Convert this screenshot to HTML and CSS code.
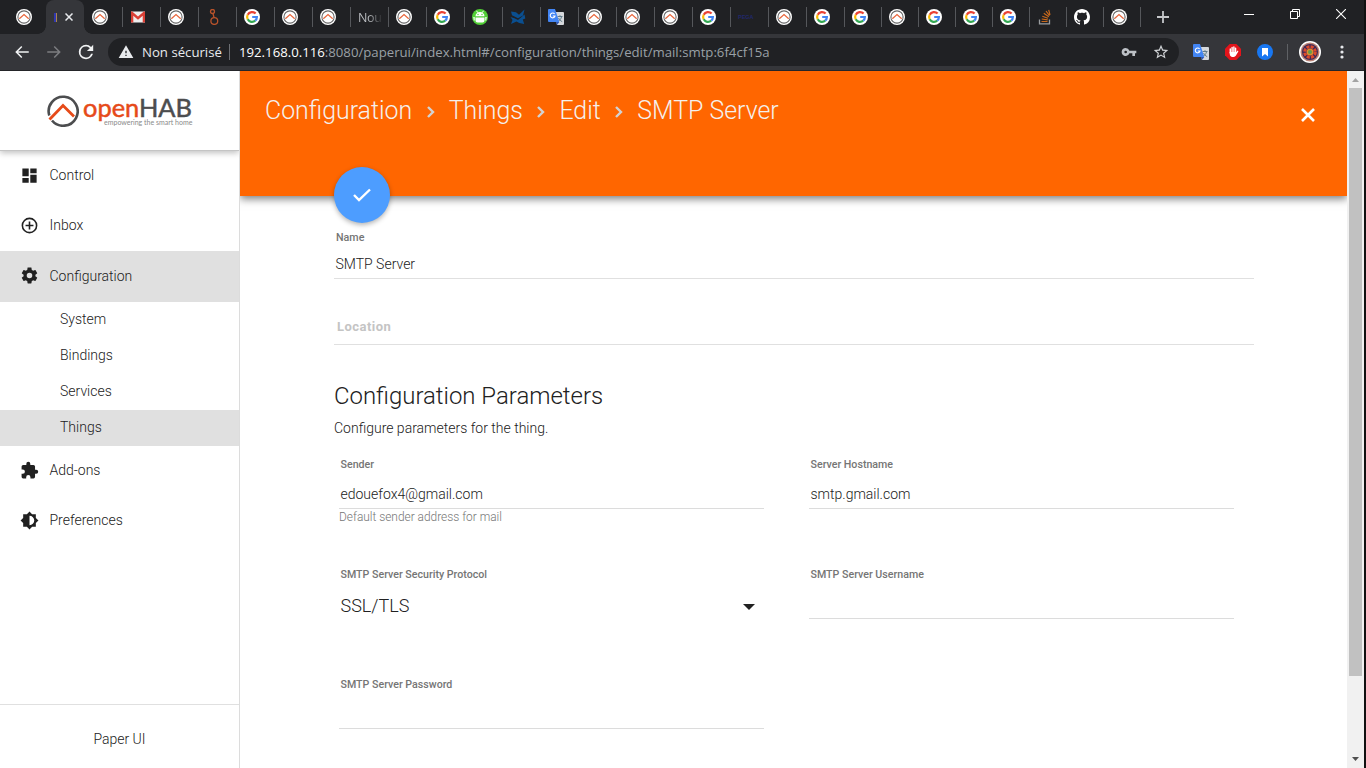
FILE: index.html
```html
<!DOCTYPE html>
<html lang="fr">
<head>
    <meta charset="UTF-8">
    <meta name="viewport" content="width=device-width, initial-scale=1.0">
    <title>Paper UI</title>
    <link rel="stylesheet" href="styles.css">
</head>
<body>
    <!-- icons used several times -->
    <svg class="defs">
        <symbol id="oh" viewBox="0 0 16 16">
            <circle cx="8" cy="8" r="8" fill="#fff"/>
            <circle cx="8" cy="8" r="6.1" fill="none" stroke="#666" stroke-width="1.1"/>
            <path d="M3.3 10.6L8 6.1l4.7 4.5" fill="none" stroke="#fff" stroke-width="2.6"/>
            <path d="M3.3 9.8L8 5.6l4.7 4.2" fill="none" stroke="#e8663c" stroke-width="1.2"/>
        </symbol>
        <symbol id="google" viewBox="0 0 16 16">
            <circle cx="8" cy="8" r="8" fill="#fff"/>
            <g fill="none" stroke-width="2.2">
                <path d="M11.6 4.6A4.9 4.9 0 0 0 3.7 5.7" stroke="#ea4335"/>
                <path d="M3.7 5.7a4.9 4.9 0 0 0 0 4.6" stroke="#fbbc05"/>
                <path d="M3.7 10.3a4.9 4.9 0 0 0 7.5 1.4" stroke="#34a853"/>
                <path d="M11.2 11.7A4.9 4.9 0 0 0 12.9 8H8.2" stroke="#4285f4"/>
            </g>
        </symbol>
        <symbol id="translate" viewBox="0 0 16 16">
            <path d="M6 3h9a1 1 0 0 1 1 1v11a1 1 0 0 1-1 1H9z" fill="#d5d8dc"/>
            <path d="M9.5 7.5h5M12 6.2v1.3M13.6 7.6c-.5 2.3-1.8 4-3.8 4.9M10.6 9c.8 1.8 2 3 3.6 3.6" fill="none" stroke="#607d8b"/>
            <path d="M1 0h6l4.3 13H1a1 1 0 0 1-1-1V1a1 1 0 0 1 1-1z" fill="#4285f4"/>
            <path d="M9 16l2.3-3H7.8z" fill="#3057b5"/>
            <path d="M6.6 5A2.4 2.4 0 1 0 7 7H4.8" fill="none" stroke="#fff" stroke-width="1.1"/>
        </symbol>
        <symbol id="chevron" viewBox="0 0 10 14">
            <path d="M2 2l5 5-5 5" fill="none" stroke="#d2d2d2" stroke-width="2.4"/>
        </symbol>
    </svg>

    <div class="browser">
        <div class="window">
            <div class="tabs">
                <div class="tab"><svg><use href="#oh"/></svg></div>
                <div class="tab active"><span class="sliver"></span><svg class="tab-close" viewBox="0 0 8 8"><path d="M.5.5l7 7M7.5.5l-7 7" stroke="#e8eaed" stroke-width="1.5"/></svg></div>
                <div class="tab"><svg><use href="#oh"/></svg></div>
                <div class="tab"><svg viewBox="0 0 16 16"><path d="M1 2.5h14v11H1z" fill="#eee"/><path d="M1 13.5v-11h1.2L8 7.6l5.8-5.1H15v11h-2.3V6.7L8 10.7l-4.7-4v6.8z" fill="#d93f35"/></svg></div>
                <div class="tab"><svg><use href="#oh"/></svg></div>
                <div class="tab"><svg viewBox="0 0 16 16" fill="none" stroke="#b9532b" stroke-width="1.3"><circle cx="6.5" cy="2.5" r="2"/><circle cx="8.3" cy="12" r="3.4"/><path d="M7 4.5l1 4"/></svg></div>
                <div class="tab"><svg><use href="#google"/></svg></div>
                <div class="tab"><svg><use href="#oh"/></svg></div>
                <div class="tab"><svg><use href="#oh"/></svg></div>
                <div class="tab"><span class="tab-title">Nou</span></div>
                <div class="tab"><svg><use href="#oh"/></svg></div>
                <div class="tab"><svg><use href="#google"/></svg></div>
                <div class="tab"><svg viewBox="0 0 16 16"><circle cx="8" cy="8" r="8" fill="#51cf36"/><path d="M3.5 7.2a4.5 4.2 0 0 1 9 0zM3.5 8.4h9v3a2 2 0 0 1-2 2h-5a2 2 0 0 1-2-2zM1.3 8h1.4v3.5H1.8zM13.3 8h1.4l-.5 3.5h-.9z" fill="#fff"/><path d="M4.5 1.8l1.4 2M11.5 1.8l-1.4 2" stroke="#fff"/><circle cx="6" cy="5.5" r=".7" fill="#51cf36"/><circle cx="10" cy="5.5" r=".7" fill="#51cf36"/></svg></div>
                <div class="tab"><svg viewBox="0 0 16 16" fill="#0a4f90"><path d="M1 2.5l5 .8 3 2.5L14.5.5 13 6.5 8 9.2 2 6.2z"/><path d="M.5 8l4 1.2L8 11l6.5-5.5.8 4-2.5 1 1.4 4.5-5-1-2.7-1.5L1 15l1.5-4z"/></svg></div>
                <div class="tab"><svg><use href="#translate"/></svg></div>
                <div class="tab"><svg><use href="#oh"/></svg></div>
                <div class="tab"><svg><use href="#oh"/></svg></div>
                <div class="tab"><svg><use href="#oh"/></svg></div>
                <div class="tab"><svg><use href="#google"/></svg></div>
                <div class="tab"><span class="pega">PEGA</span></div>
                <div class="tab"><svg><use href="#oh"/></svg></div>
                <div class="tab"><svg><use href="#google"/></svg></div>
                <div class="tab narrow"><svg><use href="#google"/></svg></div>
                <div class="tab narrow"><svg><use href="#oh"/></svg></div>
                <div class="tab narrow"><svg><use href="#google"/></svg></div>
                <div class="tab narrow"><svg><use href="#google"/></svg></div>
                <div class="tab narrow"><svg><use href="#google"/></svg></div>
                <div class="tab narrow"><svg viewBox="0 0 16 16" fill="none"><path d="M2.5 10.5v4.3h10v-4.3" stroke="#9a9da0" stroke-width="1.3"/><path d="M4.5 12.5h6M4.7 10l6 .8M5.3 7.2l5.7 2M6.8 4.3l5 3.5M9 2l3.5 4.7M11.7.8l1.3 5" stroke="#c9691c" stroke-width="1.2"/></svg></div>
                <div class="tab narrow"><svg viewBox="0 0 16 16" fill="#fff"><path d="M8 0C3.58 0 0 3.58 0 8c0 3.54 2.29 6.53 5.47 7.59.4.07.55-.17.55-.38 0-.19-.01-.82-.01-1.49-2.01.37-2.53-.49-2.69-.94-.09-.23-.48-.94-.82-1.13-.28-.15-.68-.52-.01-.53.63-.01 1.08.58 1.23.82.72 1.21 1.87.87 2.33.66.07-.52.28-.87.51-1.07-1.78-.2-3.64-.89-3.64-3.95 0-.87.31-1.59.82-2.15-.08-.2-.36-1.02.08-2.12 0 0 .67-.21 2.2.82.64-.18 1.32-.27 2-.27s1.36.09 2 .27c1.53-1.04 2.2-.82 2.2-.82.44 1.1.16 1.92.08 2.12.51.56.82 1.27.82 2.15 0 3.07-1.87 3.75-3.65 3.95.29.25.54.73.54 1.48 0 1.07-.01 1.93-.01 2.2 0 .21.15.46.55.38A8.01 8.01 0 0 0 16 8c0-4.42-3.58-8-8-8z"/></svg></div>
                <div class="tab narrow"><svg><use href="#oh"/></svg></div>
                <div class="tab new-tab"><svg viewBox="0 0 12 12"><path d="M6 0v12M0 6h12" stroke="#c5c7ca" stroke-width="1.8"/></svg></div>
                <div class="win-buttons">
                    <svg viewBox="0 0 10 10"><path d="M0 5.5h10" stroke="#fff"/></svg>
                    <svg viewBox="0 0 10 10" fill="none" stroke="#fff"><path d="M.5 2.5h7v7h-7zM2.5 2.5v-2h7v7h-2"/></svg>
                    <svg viewBox="0 0 10 10"><path d="M0 0l10 10M10 0L0 10" stroke="#fff" stroke-width="1.1"/></svg>
                </div>
            </div>

            <div class="toolbar">
                <svg class="nav-icon" viewBox="0 0 24 24" fill="#f1f3f4"><path d="M21 11H6.83l5.59-5.59L11 4l-8 8 8 8 1.41-1.41L6.83 13H21v-2z"/></svg>
                <svg class="nav-icon" viewBox="0 0 24 24" fill="#7c7d80"><path d="M13 4l-1.41 1.41L17.17 11H3v2h14.17l-5.58 5.59L13 20l8-8z"/></svg>
                <svg class="nav-icon" viewBox="2 2 20 20" fill="#f1f3f4"><path d="M17.65 6.35A7.958 7.958 0 0 0 12 4a8 8 0 1 0 7.73 10h-2.08A6 6 0 1 1 12 6c1.66 0 3.14.69 4.22 1.78L13 11h7V4l-2.35 2.35z"/></svg>
                <div class="omnibox">
                    <svg class="warn" viewBox="0 0 24 24" fill="#e8eaed"><path d="M1 21h22L12 2 1 21zm12-3h-2v-2h2v2zm0-4h-2v-4h2v4z"/></svg>
                    <span class="insecure">Non sécurisé</span>
                    <span class="url"><b>192.168.0.116</b>:8080/paperui/index.html#/configuration/things/edit/mail:smtp:6f4cf15a</span>
                    <svg class="key" viewBox="0 0 24 24" fill="#bdc1c6"><path d="M12.65 10A5.99 5.99 0 0 0 7 6a6 6 0 1 0 5.65 8H17v4h4v-4h2v-4H12.65zM7 14a2 2 0 1 1 0-4 2 2 0 0 1 0 4z"/></svg>
                    <svg class="star" viewBox="1 1 22 22" fill="#d0d3d6"><path d="M22 9.24l-7.19-.62L12 2 9.19 8.63 2 9.24l5.46 4.73L5.82 21 12 17.27 18.18 21l-1.63-7.03L22 9.24zM12 15.4l-3.76 2.27 1-4.28-3.32-2.88 4.38-.38L12 6.1l1.71 4.04 4.38.38-3.32 2.88 1 4.28L12 15.4z"/></svg>
                </div>
                <div class="extensions">
                    <svg><use href="#translate"/></svg>
                    <svg viewBox="0 0 16 16"><path d="M4.7 0h6.6L16 4.7v6.6L11.3 16H4.7L0 11.3V4.7z" fill="#e3141b"/><path d="M5.3 5v4M7.1 3.5V9M8.9 3v6M10.6 4.3V9" stroke="#fff" stroke-width="1.4" stroke-linecap="round"/><path d="M4.6 8h6.7l1.4-1.4c.6.1.8.6.5 1.1l-2.4 4c-1.5 2-5 2-5.9-.7z" fill="#fff"/></svg>
                    <svg viewBox="0 0 16 16"><circle cx="8" cy="8" r="8" fill="#1877f2"/><path d="M5 4h6v8.5L8 10l-3 2.5z" fill="#fff"/></svg>
                </div>
                <svg class="avatar" viewBox="0 0 22 22"><circle cx="11" cy="11" r="11" fill="#fff"/><circle cx="11" cy="11" r="9.5" fill="#b98275"/><circle cx="11" cy="11" r="8" fill="#3d2856"/><circle cx="11" cy="11" r="5.3" fill="none" stroke="#dc492c" stroke-width="3" stroke-dasharray="3 1.16"/><circle cx="11" cy="11" r="3.5" fill="#e08a2d"/><circle cx="11" cy="11" r="2" fill="#5f9b4c"/></svg>
                <svg class="dots" viewBox="0 0 4 14" fill="#e8eaed"><circle cx="2" cy="2" r="1.6"/><circle cx="2" cy="7" r="1.6"/><circle cx="2" cy="12" r="1.6"/></svg>
            </div>

            <div class="page">
                <div class="sidebar">
                    <div class="logo">
                        <svg class="logo-mark" viewBox="0 0 32 32" fill="none"><path d="M2.300 20.500A14.500 14.500 0 1 1 5 25.500" stroke="#4c4d4f" stroke-width="2.600"/><path d="M2.500 24.500L16 10.500l11 11" stroke="#e64a19" stroke-width="2.800"/></svg>
                        <div class="logo-text">
                            <div class="logo-name"><span>open</span>HAB</div>
                            <div class="slogan">empowering the smart home</div>
                        </div>
                    </div>
                    <ul class="menu">
                        <li><svg viewBox="0 0 24 24"><path d="M3 13h8V3H3v10zm0 8h8v-6H3v6zm10 0h8V11h-8v10zm0-18v6h8V3h-8z"/></svg>Control</li>
                        <li><svg viewBox="0 0 24 24"><path d="M13 7h-2v4H7v2h4v4h2v-4h4v-2h-4V7zm-1-5a10 10 0 1 0 0 20 10 10 0 0 0 0-20zm0 18a8 8 0 1 1 0-16 8 8 0 0 1 0 16z"/></svg>Inbox</li>
                        <li class="selected"><svg viewBox="0 0 24 24"><path d="M19.430 12.980c.04-.32.07-.64.07-.98s-.03-.66-.07-.98l2.110-1.650c.19-.15.24-.42.12-.64l-2-3.460c-.12-.22-.39-.3-.61-.22l-2.490 1c-.52-.4-1.080-.73-1.690-.98l-.38-2.650C14.460 2.180 14.250 2 14 2h-4c-.25 0-.46.18-.49.42l-.38 2.650c-.61.25-1.170.59-1.690.98l-2.490-1c-.23-.09-.49 0-.61.22l-2 3.460c-.13.22-.07.49.12.64l2.110 1.650c-.04.32-.07.65-.07.98s.03.66.07.98l-2.110 1.650c-.19.15-.24.42-.12.64l2 3.460c.12.22.39.3.61.22l2.490-1c.52.4 1.080.73 1.690.98l.38 2.650c.03.24.24.42.49.42h4c.25 0 .46-.18.49-.42l.38-2.650c.61-.25 1.170-.59 1.690-.98l2.490 1c.23.09.49 0 .61-.22l2-3.460c.12-.22.07-.49-.12-.64l-2.110-1.650zM12 15.500a3.500 3.500 0 1 1 0-7 3.500 3.500 0 0 1 0 7z"/></svg>Configuration</li>
                        <li class="sub">System</li>
                        <li class="sub">Bindings</li>
                        <li class="sub">Services</li>
                        <li class="sub current">Things</li>
                        <li><svg viewBox="0 0 24 24"><path d="M20.500 11H19V7a2 2 0 0 0-2-2h-4V3.500a2.500 2.500 0 0 0-5 0V5H4a2 2 0 0 0-1.990 2v3.800H3.500a2.700 2.700 0 0 1 0 5.400H2V20a2 2 0 0 0 2 2h3.800v-1.500a2.700 2.700 0 0 1 5.400 0V22H17a2 2 0 0 0 2-2v-4h1.500a2.500 2.500 0 0 0 0-5z"/></svg>Add-ons</li>
                        <li><svg viewBox="0 0 24 24"><path d="M20 15.310L23.310 12 20 8.690V4h-4.690L12 .69 8.690 4H4v4.690L.69 12 4 15.310V20h4.690L12 23.310 15.310 20H20v-4.690zM12 18V6a6 6 0 0 1 0 12z"/></svg>Preferences</li>
                    </ul>
                    <div class="side-footer">Paper UI</div>
                </div>

                <div class="main">
                    <div class="header">
                        <div class="crumbs">
                            <span>Configuration</span><svg><use href="#chevron"/></svg>
                            <span>Things</span><svg><use href="#chevron"/></svg>
                            <span>Edit</span><svg><use href="#chevron"/></svg>
                            <span>SMTP Server</span>
                        </div>
                        <svg class="close" viewBox="0 0 14 14"><path d="M1 1l12 12M13 1L1 13" stroke="#fff" stroke-width="2.600"/></svg>
                        <div class="fab"><svg viewBox="0 0 24 24"><path d="M4 12l5 5L20 6.500" fill="none" stroke="#fff" stroke-width="2.400"/></svg></div>
                    </div>
                    <div class="content">
                        <div class="field name">
                            <label>Name</label>
                            <div class="value">SMTP Server</div>
                        </div>
                        <div class="field location">Location</div>
                        <h2>Configuration Parameters</h2>
                        <p class="desc">Configure parameters for the thing.</p>
                        <div class="params">
                            <div class="param">
                                <label>Sender</label>
                                <div class="value">edouefox4@gmail.com</div>
                                <div class="hint">Default sender address for mail</div>
                            </div>
                            <div class="param">
                                <label>Server Hostname</label>
                                <div class="value">smtp.gmail.com</div>
                            </div>
                            <div class="param">
                                <label>SMTP Server Security Protocol</label>
                                <div class="value select">SSL/TLS<i></i></div>
                            </div>
                            <div class="param">
                                <label>SMTP Server Username</label>
                                <div class="value"></div>
                            </div>
                            <div class="param">
                                <label>SMTP Server Password</label>
                                <div class="value"></div>
                            </div>
                        </div>
                    </div>
                </div>

                <div class="scrollbar">
                    <svg viewBox="0 0 7 4"><path d="M0 4L3.500 0 7 4z" fill="#a3a3a3"/></svg>
                    <div class="thumb"></div>
                    <svg class="down" viewBox="0 0 7 4"><path d="M0 0h7L3.500 4z" fill="#505050"/></svg>
                </div>
            </div>
        </div>
    </div>
</body>
</html>
```
FILE: styles.css
```css
*{
    padding:0;
    margin:0;
    box-sizing:border-box;
    list-style:none;
}
body{
    width:1366px;
    height:768px;
    overflow:hidden;
    font-family:Roboto, "Liberation Sans", sans-serif;
    font-weight:300;
    font-size:14px;
    color:#212121;
}
svg{
    display:block;
    flex:none;
}
.defs{
    position:absolute;
    width:0;
    height:0;
}
.browser{
    height:768px;
    padding-right:2px;
    background:#111;
}
.window{
    width:1364px;
    height:768px;
    display:flex;
    flex-direction:column;
}

/* tab strip */
.tabs{
    height:34px;
    padding-left:8px;
    display:flex;
    background:#202124;
}
.tab{
    flex:none;
    width:38px;
    height:34px;
    padding-left:8px;
    display:flex;
    align-items:center;
    background:linear-gradient(#55575b, #55575b) 0 7px / 1px 20px no-repeat;
}
.tab.narrow{
    width:37px;
}
.tab:first-child,
.tab.active + .tab{
    background:none;
}
.tab svg{
    width:16px;
    height:16px;
}
.tab.active{
    position:relative;
    background:#35363a;
    border-radius:8px 8px 0 0;
}
.tab.active:before,
.tab.active:after{
    content:"";
    position:absolute;
    bottom:0;
    width:8px;
    height:8px;
}
.tab.active:before{
    left:-8px;
    background:radial-gradient(circle at 0 0, transparent 7.5px, #35363a 8px);
}
.tab.active:after{
    right:-8px;
    background:radial-gradient(circle at 100% 0, transparent 7.5px, #35363a 8px);
}
.sliver{
    width:3px;
    height:9px;
    background:linear-gradient(90deg, #3138ae 60%, #aa8550 60%);
}
.tab.active .tab-close{
    width:8px;
    height:8px;
    margin-left:8px;
}
.tab-title{
    width:26px;
    font:12.5px "Open Sans", sans-serif;
    letter-spacing:-.4px;
    color:transparent;
    background:linear-gradient(90deg, #c0c3c7 40%, #3a3b3e 85%);
    -webkit-background-clip:text;
    background-clip:text;
}
.pega{
    font:bold 5.5px "Liberation Sans", sans-serif;
    color:#20286a;
}
.tab.new-tab{
    padding-left:17px;
}
.tab.new-tab svg{
    width:12px;
    height:12px;
}
.win-buttons{
    margin:9px 18px 0 auto;
    display:flex;
    gap:36px;
}
.win-buttons svg{
    width:10px;
    height:10px;
}

/* toolbar */
.toolbar{
    height:37px;
    padding-left:13px;
    display:flex;
    align-items:center;
    background:#35363a;
    border-bottom:1px solid #242529;
}
.nav-icon{
    width:18px;
    height:18px;
    margin-right:14px;
}
.omnibox{
    width:1071px;
    height:28px;
    margin-left:-1px;
    padding-left:10px;
    display:flex;
    align-items:center;
    border-radius:14px;
    background:#202124;
    font:13.2px "Open Sans", sans-serif;
    white-space:nowrap;
}
.warn{
    width:16px;
    height:16px;
}
.insecure{
    width:88px;
    height:16px;
    line-height:17px;
    margin-left:8px;
    color:#e8eaed;
    border-right:1px solid #6d6f73;
}
.url{
    margin-left:9px;
    color:#9aa0a6;
}
.url b{
    font-weight:400;
    color:#fff;
}
.key{
    width:16px;
    height:16px;
    margin-left:auto;
}
.star{
    width:16px;
    height:16px;
    margin:0 10px 0 16px;
}
.extensions{
    display:flex;
    gap:16px;
    margin-left:14px;
    padding-right:14px;
    border-right:1px solid #5f6165;
}
.extensions svg{
    width:16px;
    height:16px;
}
.avatar{
    width:22px;
    height:22px;
    margin-left:11px;
}
.dots{
    width:4px;
    height:14px;
    margin-left:19px;
}

/* page */
.page{
    height:697px;
    display:flex;
    overflow:hidden;
    background:#fff;
}
.sidebar{
    width:240px;
    display:flex;
    flex-direction:column;
    border-right:1px solid #dcdcdc;
}
.logo{
    height:80px;
    padding:24px 0 0 47px;
    display:flex;
    border-bottom:1px solid #c4c4c4;
    box-shadow:0 2px 6px rgba(0,0,0,.25);
    clip-path:inset(0 0 -12px 0);
}
.logo-mark{
    width:32px;
    height:32px;
}
.logo-text{
    margin-left:4px;
    white-space:nowrap;
    font-family:Lato, sans-serif;
}
.logo-name{
    height:23px;
    line-height:25px;
    font-size:25.4px;
    font-weight:400;
    color:#4c4d4f;
    -webkit-text-stroke:.5px;
}
.logo-name span{
    color:#e64a19;
}
.slogan{
    margin-left:21px;
    font-size:7px;
    font-weight:400;
    line-height:9px;
    color:#8a8a8a;
}
.menu li{
    height:50px;
    padding:0 0 2px 19.5px;
    display:flex;
    align-items:center;
}
.menu svg{
    width:19px;
    height:19px;
    margin-right:11px;
    fill:#212121;
}
.menu .selected{
    height:51px;
    background:#e0e0e0;
}
.menu .sub{
    height:36px;
    padding-left:60px;
}
.menu .current{
    background:#e0e0e0;
}
.side-footer{
    height:64px;
    margin-top:auto;
    padding-top:6px;
    line-height:57px;
    text-align:center;
    border-top:1px solid #e0e0e0;
}
.main{
    width:1107px;
}
.header{
    position:relative;
    height:125px;
    padding:22px 32px 0 25px;
    display:flex;
    justify-content:space-between;
    background:#f60;
    box-shadow:0 3px 8px rgba(0,0,0,.5);
    clip-path:inset(0 0 -40px 0);
}
.crumbs{
    height:35px;
    display:flex;
    align-items:center;
    font-size:24.9px;
    color:#f5f0ec;
    white-space:nowrap;
}
.crumbs svg{
    width:10px;
    height:14px;
    margin:3px 13px 0 13.5px;
}
.close{
    width:14px;
    height:14px;
    margin-top:15px;
}
/* save button, sits over the edge of the header */
.fab{
    position:absolute;
    left:94px;
    bottom:-27px;
    width:56px;
    height:56px;
    display:flex;
    align-items:center;
    justify-content:center;
    border-radius:50%;
    background:#4d9dff;
    box-shadow:0 2px 5px rgba(0,0,0,.3);
}
.fab svg{
    width:24px;
    height:24px;
}
.content{
    padding:35px 93px 0 94px;
}
label{
    display:block;
    height:14px;
    line-height:14px;
    font-size:10.65px;
    font-weight:500;
    color:#757575;
}
.field{
    border-bottom:1px solid #e0e0e0;
}
.field.name{
    height:48px;
}
.field label{
    padding-left:2px;
    font-size:10.7px;
}
.field .value{
    margin-top:9px;
    padding-left:1.5px;
    line-height:20px;
}
.field.location{
    height:66px;
    padding:38px 0 0 3px;
    line-height:20px;
    font-size:13px;
    letter-spacing:.45px;
    font-weight:700;
    color:#c4c4c4;
}
h2{
    margin-top:34px;
    line-height:34px;
    font-size:23.95px;
    font-weight:300;
}
.desc{
    margin-top:5px;
    line-height:20px;
}
.params{
    padding:20px 0 0 5px;
    display:grid;
    grid-template-columns:425px 425px;
    grid-auto-rows:110px;
    column-gap:45px;
}
.param label{
    padding-left:1.5px;
}
.param .value{
    height:37px;
    padding:13px 0 0 1.5px;
    line-height:19px;
    border-bottom:1px solid #dcdcdc;
}
.param .select{
    display:flex;
    justify-content:space-between;
    border:0;
    padding-top:14px;
    padding-right:9px;
    font-size:18px;
}
.select i{
    margin-top:8px;
    height:6px;
    border:6px solid transparent;
    border-top-color:#212121;
    border-bottom:0;
}
.hint{
    line-height:17px;
    font-size:11.9px;
    color:#757575;
}

/* scroll bar */
.scrollbar{
    width:17px;
    padding:7px 2px;
    display:flex;
    flex-direction:column;
    background:#f1f1f1;
}
.scrollbar svg{
    width:7px;
    height:4px;
    margin:0 3px;
}
.thumb{
    height:588px;
    margin-top:6px;
    background:#c1c1c1;
}
.scrollbar .down{
    margin-top:auto;
}
```
